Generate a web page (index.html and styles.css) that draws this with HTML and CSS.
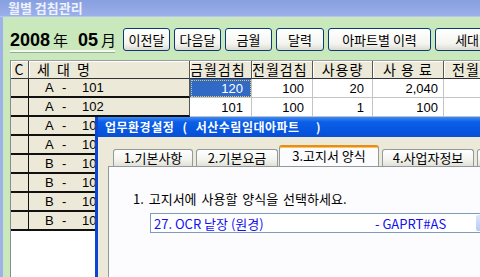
FILE: index.html
```html
<!DOCTYPE html>
<html>
<head>
    <title>월별 검침관리</title>
    <link rel="stylesheet" href="styles.css">
</head>
<body>
    <div class="window">
        <div class="titlebar">월별 검침관리</div>

        <div class="main">
            <div class="toolbar">
                <div class="period">
                    <span class="num">2008</span><span class="unit">年</span><span class="num">05</span><span class="unit">月</span>
                </div>
                <button class="btn w47">이전달</button>
                <button class="btn w47">다음달</button>
                <button class="btn w47">금월</button>
                <button class="btn w48">달력</button>
                <button class="btn w103">아파트별 이력</button>
                <button class="btn w103">세대별 이력</button>
            </div>

            <div class="grid">
                <table class="meter">
                    <colgroup>
                        <col class="c-chk">
                        <col class="c-name">
                        <col class="c-now">
                        <col class="c-prev">
                        <col class="c-use">
                        <col class="c-fee">
                        <col class="c-last">
                    </colgroup>
                    <thead>
                        <tr>
                            <th class="center">C</th>
                            <th class="name-head">세 대 명</th>
                            <th>금월검침</th>
                            <th>전월검침</th>
                            <th class="center">사용량</th>
                            <th class="center">사 용 료</th>
                            <th class="last-head">전월사용</th>
                        </tr>
                    </thead>
                    <tbody>
                        <tr>
                            <td class="fix"></td>
                            <td class="fix name"><span class="blk">A</span><span class="dash">-</span>101</td>
                            <td class="sel">120</td>
                            <td>100</td>
                            <td>20</td>
                            <td class="fee">2,040</td>
                            <td></td>
                        </tr>
                        <tr>
                            <td class="fix"></td>
                            <td class="fix name"><span class="blk">A</span><span class="dash">-</span>102</td>
                            <td>101</td>
                            <td>100</td>
                            <td>1</td>
                            <td class="fee">100</td>
                            <td></td>
                        </tr>
                        <tr>
                            <td class="fix"></td>
                            <td class="fix name"><span class="blk">A</span><span class="dash">-</span>103</td>
                            <td></td><td></td><td></td><td></td><td></td>
                        </tr>
                        <tr>
                            <td class="fix"></td>
                            <td class="fix name"><span class="blk">A</span><span class="dash">-</span>104</td>
                            <td></td><td></td><td></td><td></td><td></td>
                        </tr>
                        <tr>
                            <td class="fix"></td>
                            <td class="fix name"><span class="blk">B</span><span class="dash">-</span>101</td>
                            <td></td><td></td><td></td><td></td><td></td>
                        </tr>
                        <tr>
                            <td class="fix"></td>
                            <td class="fix name"><span class="blk">B</span><span class="dash">-</span>102</td>
                            <td></td><td></td><td></td><td></td><td></td>
                        </tr>
                        <tr>
                            <td class="fix"></td>
                            <td class="fix name"><span class="blk">B</span><span class="dash">-</span>103</td>
                            <td></td><td></td><td></td><td></td><td></td>
                        </tr>
                        <tr>
                            <td class="fix"></td>
                            <td class="fix name"><span class="blk">B</span><span class="dash">-</span>104</td>
                            <td></td><td></td><td></td><td></td><td></td>
                        </tr>
                    </tbody>
                </table>
            </div>
        </div>

        <!-- settings dialog on top of the grid -->
        <div class="dialog">
            <div class="dlg-title">업무환경설정 ( 서산수림임대아파트&nbsp;&nbsp;)</div>
            <div class="dlg-body">
                <div class="tabs">
                    <div class="tab t1">1.기본사항</div>
                    <div class="tab t2">2.기본요금</div>
                    <div class="tab active">3.고지서 양식</div>
                    <div class="tab t4">4.사업자정보</div>
                    <div class="tab t5">5.기타</div>
                </div>
                <div class="panel">
                    <p class="ask">1. 고지서에 사용할 양식을 선택하세요.</p>
                    <div class="combo">
                        <span class="form-name">27. OCR 낱장 (원경)</span>
                        <span class="form-code">- GAPRT#AS</span>
                        <span class="drop"></span>
                    </div>
                </div>
            </div>
        </div>
    </div>
</body>
</html>
```

FILE: styles.css
```css
body {
    margin: 0;
    width: 480px;
    height: 277px;
    overflow: hidden;
    font-family: "Noto Sans CJK KR", "Liberation Sans", sans-serif;
    font-size: 13px;
}
.window {
    position: relative;
    display: flex;
    flex-direction: column;
    height: 277px;
}
.titlebar {
    height: 16px;
    line-height: 16px;
    padding-left: 8px;
    background: linear-gradient(#889fe0, #9bb0e9);
    border-bottom: 1px solid #b6c4ee;
    color: #eef2fc;
    font-weight: bold;
    font-size: 13px;
}
.main {
    flex: 1;
    display: flex;
    flex-direction: column;
    background-color: #c9e8bc;
    border-left: 3px solid #9fb2e8;
    padding: 11px 0 0 7px;
    min-height: 0;
}
.toolbar {
    display: flex;
    align-items: center;
    height: 23px;
    gap: 4px;
}
.period {
    width: 105px;
    height: 23px;
    margin-right: 4px;
    border-bottom: 2px solid #f4f8f2;
    box-shadow: 0 1px 0 #9aa898;
    display: flex;
    align-items: flex-end;
    line-height: 20px;
    flex-shrink: 0;
}
.period .num {
    font-family: "Liberation Sans", sans-serif;
    font-size: 18px;
    font-weight: bold;
}
.period .unit {
    font-size: 15px;
    margin: 0 10px 0 3px;
}
.period .unit:last-child {
    margin-right: 0;
}
.btn {
    flex-shrink: 0;
    height: 23px;
    padding: 0;
    border: 1px solid #0a3a78;
    border-radius: 3px;
    background: linear-gradient(#ffffff, #f4f4f0 70%, #dcdad0);
    font-family: "Noto Sans CJK KR", sans-serif;
    font-size: 13px;
    color: #000;
    line-height: 20px;
}
.w47 { width: 47px; }
.w48 { width: 48px; }
.w103 { width: 103px; }

.grid {
    flex: 1;
    margin-top: 9px;
    background-color: #fff;
    border-top: 1px solid #9c9c9c;
    border-left: 1px solid #8c8c8c;
}
.meter {
    border-collapse: separate;
    border-spacing: 0;
    table-layout: fixed;
    width: 520px;
}
.c-chk { width: 18px; }
.c-name { width: 161px; }
.c-now { width: 62px; }
.c-prev { width: 61px; }
.c-use { width: 60px; }
.c-fee { width: 71px; }
.c-last { width: 87px; }
.meter th {
    box-sizing: border-box;
    height: 18px;
    padding: 0;
    background-color: #ece9d8;
    border-right: 1px solid #555;
    border-bottom: 1px solid #333;
    box-shadow: inset 1px 1px 0 #fff;
    font-weight: normal;
    font-size: 14px;
    letter-spacing: 1px;
    text-align: left;
    line-height: 17px;
    white-space: nowrap;
    overflow: hidden;
}
.meter th.center {
    text-align: center;
}
.meter th.name-head {
    padding-left: 8px;
    word-spacing: 2px;
}
.meter th.last-head {
    padding-left: 8px;
}
.meter td {
    box-sizing: border-box;
    height: 19px;
    padding: 0 8px 0 0;
    border-right: 1px solid #c4c4c4;
    border-bottom: 1px solid #c4c4c4;
    font-family: "Liberation Sans", sans-serif;
    font-size: 13px;
    text-align: right;
    line-height: 17px;
    white-space: nowrap;
    overflow: hidden;
}
.meter td.fee {
    padding-right: 5px;
}
.meter td.fix {
    background-color: #ece9d8;
    border-right: 1px solid #111;
    border-bottom: 2px solid #111;
    text-align: left;
    padding: 0;
}
.meter td.name {
    padding-left: 16px;
    border-right-color: #555;
}
.blk {
    display: inline-block;
    width: 17px;
}
.dash {
    display: inline-block;
    width: 20px;
}
.meter td.sel {
    background-color: #316ac5;
    color: #fff;
    outline: 1px dotted #e8c860;
    outline-offset: -2px;
}

.dialog {
    position: absolute;
    left: 95px;
    top: 117px;
    width: 420px;
    height: 190px;
    background-color: #ece9d8;
    border-left: 3px solid #0b45d6;
}
.dlg-title {
    height: 20px;
    line-height: 20px;
    padding-left: 7px;
    background: linear-gradient(#3d8af7, #0b5fe6 25%, #0655e0 70%, #0a4fd2);
    color: #fff;
    font-weight: bold;
    font-size: 12px;
    letter-spacing: 0.5px;
    word-spacing: 5px;
    white-space: nowrap;
}
.dlg-body {
    padding: 8px 0 0 12px;
}
.tabs {
    display: flex;
    align-items: flex-end;
    height: 21px;
    padding-left: 3px;
}
.tab {
    box-sizing: border-box;
    height: 17px;
    margin-right: 3px;
    border: 1px solid #919b9c;
    border-bottom: none;
    border-radius: 3px 3px 0 0;
    background: linear-gradient(#ffffff, #f3f3ef 60%, #e2e0d6);
    font-size: 13px;
    line-height: 15px;
    text-align: center;
    white-space: nowrap;
    flex-shrink: 0;
}
.t1 { width: 80px; }
.t2 { width: 82px; margin-right: 1px; }
.t4 { width: 92px; }
.t5 { width: 60px; }
.tab.active {
    position: relative;
    z-index: 1;
    width: 100px;
    height: 21px;
    margin-right: 3px;
    background: #fcfcfe;
    border-top: 2px solid #e68b2c;
    box-shadow: inset 0 1px 0 #ffc83c;
    line-height: 18px;
}
.panel {
    margin-left: -2px;
    height: 140px;
    border: 1px solid #919b9c;
    background-color: #fcfcfe;
    padding: 0 0 0 24px;
}
.ask {
    margin: 0;
    padding-top: 23px;
    font-size: 13px;
    line-height: 17px;
    word-spacing: 2px;
    white-space: nowrap;
}
.combo {
    position: relative;
    display: flex;
    align-items: center;
    height: 20px;
    width: 345px;
    margin: 6px 0 0 17px;
    box-sizing: border-box;
    border: 1px solid #7f9db9;
    background-color: #fff;
    color: #1010f0;
    font-size: 13px;
    white-space: nowrap;
}
.form-name {
    width: 221px;
    padding-left: 3px;
}
.drop {
    position: absolute;
    top: 1px;
    right: 1px;
    width: 17px;
    height: 16px;
    border-radius: 2px;
    background: linear-gradient(#dce6fb, #b6cbf6);
}
```
